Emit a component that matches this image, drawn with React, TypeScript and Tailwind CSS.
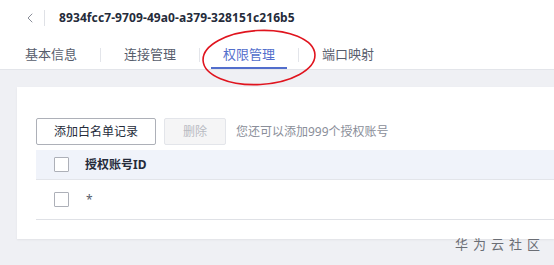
import { ChevronLeft } from "lucide-react";

const tabs = ["基本信息", "连接管理", "权限管理", "端口映射"];

const App = () => {
  return (
    <div
      className="relative w-[554px] h-[265px] overflow-hidden bg-[#eff0f4]"
      style={{ fontFamily: '"Noto Sans", "Noto Sans CJK SC", sans-serif' }}
    >
      {/* 顶部标题 + 页签 */}
      <header className="bg-white h-[70px] border-b border-[#e3e5ea]">
        <div className="flex items-center h-[34px] pl-[22px] pt-[1px]">
          <ChevronLeft size={16} strokeWidth={1.5} className="text-[#8a8e99]" />
          <span className="w-px h-[16px] bg-[#dfe1e6] ml-[6px] mr-[14px]" />
          <span className="text-[12px] font-bold text-[#252b3a] tracking-[0.1px]">
            8934fcc7-9709-49a0-a379-328151c216b5
          </span>
        </div>
        <nav className="flex items-stretch h-[35px] ml-[13px]">
          {tabs.map((tab, idx) => (
            <div key={tab} className="flex items-center pt-[6px]">
              {idx > 0 && <span className="w-px h-[14px] bg-[#e3e5ea] mx-[11px]" />}
              <div
                className={
                  idx === 2
                    ? "relative h-full flex items-center px-3 text-[13px] text-[#526ecc]"
                    : "relative h-full flex items-center px-3 text-[13px] text-[#575d6c]"
                }
              >
                {tab}
                {idx === 2 && (
                  <span className="absolute left-0 right-0 bottom-0 h-[2px] bg-[#526ecc]" />
                )}
              </div>
            </div>
          ))}
        </nav>
      </header>

      {/* 内容卡片 */}
      <section className="ml-[17px] mt-[17px] bg-white h-[152px] pl-[19px] pt-[31px] shadow-[0_1px_2px_rgba(0,0,0,0.06)]">
        <div className="flex items-center gap-[8px]">
          <button className="h-[27px] w-[120px] border border-[#adb0b8] rounded-[2px] text-[12px] text-[#252b3a]">
            添加白名单记录
          </button>
          <button className="h-[27px] w-[62px] border border-[#e3e5ea] bg-[#f5f5f6] rounded-[2px] text-[12px] text-[#b8bac2]">
            删除
          </button>
          <span className="ml-[2px] text-[12px] text-[#8a8e99]">您还可以添加999个授权账号</span>
        </div>

        <div className="mt-[5px]">
          <div className="flex items-center h-[30px] bg-[#f0f3fa] border-b border-[#e3e5ea] pl-[18px]">
            <span className="w-[15px] h-[15px] border border-[#adb0b8] bg-white rounded-[1px]" />
            <span className="ml-[16px] text-[12px] font-bold text-[#252b3a]">授权账号ID</span>
          </div>
          <div className="flex items-center h-[40px] border-b border-[#dfe1e6] pl-[18px]">
            <span className="w-[15px] h-[15px] border border-[#adb0b8] bg-white rounded-[1px]" />
            <span className="ml-[17px] text-[12px] text-[#575d6c]">*</span>
          </div>
        </div>
      </section>

      {/* 红色圈注 */}
      <svg className="absolute left-[200px] top-[28px]" width="120" height="60" viewBox="0 0 120 60">
        <ellipse
          cx="59"
          cy="29.5"
          rx="56"
          ry="27"
          fill="none"
          stroke="#e0141e"
          strokeWidth="1.6"
          transform="rotate(-3 59 29.5)"
        />
      </svg>

      {/* 水印 */}
      <span className="absolute left-[455px] top-[235px] whitespace-nowrap text-[13px] tracking-[5px] text-[#6b6e75]">
        华为云社区
      </span>
    </div>
  );
};

export default App;
